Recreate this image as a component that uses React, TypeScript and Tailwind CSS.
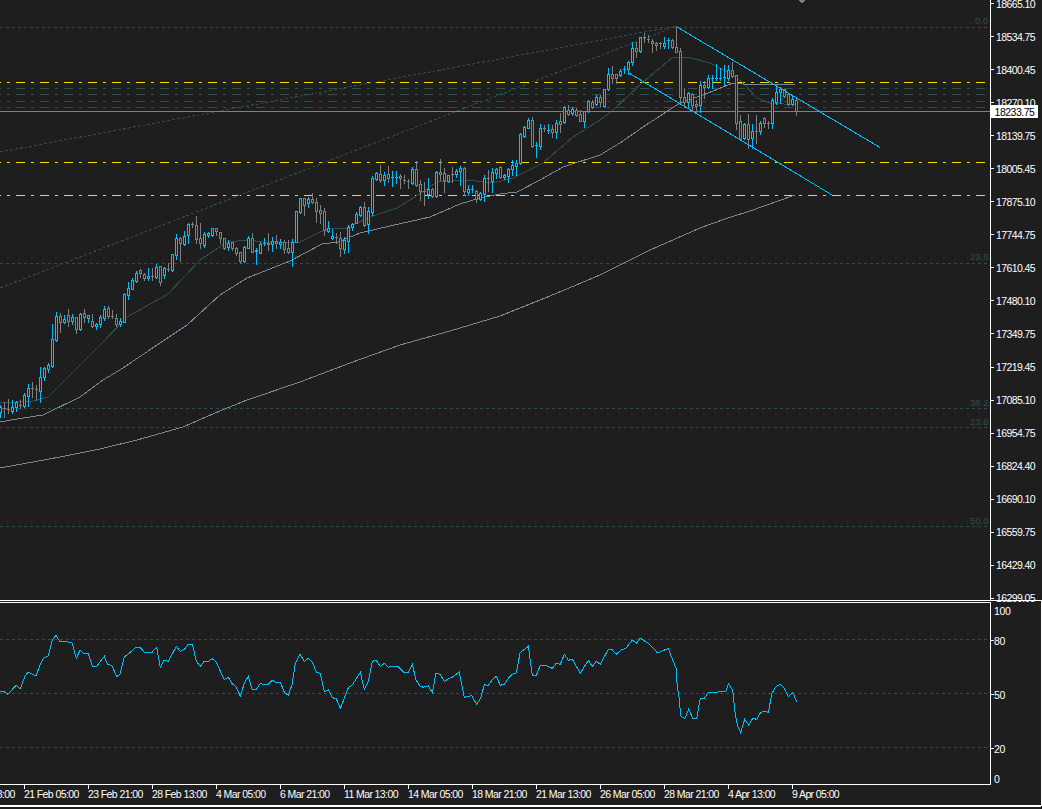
type Row = [string, number, number, number, number];

const BG = "#1e1e1e";
const BLUE = "#00bfff";
const GRAY = "#808080";
const SLATE = "#2f4f4f";
const STEEL = "#778899";
const GOLD = "#ffd700";

// body top, body bottom, wick top, wick bottom, in the units of each block below
const part1: Row[] = [
  ["b", 620, 635, 615, 650], ["g", 625, 625, 605, 650], ["g", 628, 628, 598, 640], ["b", 620, 633, 600, 640],
  ["b", 605, 622, 602, 632], ["g", 615, 615, 600, 625], ["b", 585, 617, 580, 620], ["b", 565, 587, 553, 617],
  ["g", 565, 565, 545, 590], ["g", 568, 568, 555, 600], ["b", 532, 572, 502, 605], ["b", 505, 530, 502, 540],
  ["b", 495, 507, 490, 515], ["b", 418, 497, 373, 500], ["b", 348, 420, 337, 422], ["g", 348, 365, 340, 395],
  ["b", 358, 365, 345, 370], ["g", 346, 362, 327, 377], ["b", 352, 362, 342, 372], ["g", 350, 388, 350, 398],
  ["b", 342, 388, 340, 390], ["g", 340, 352, 327, 365], ["b", 344, 354, 344, 365], ["g", 363, 378, 342, 382],
  ["b", 372, 377, 368, 386], ["b", 352, 373, 345, 380], ["b", 328, 354, 318, 360], ["g", 325, 347, 318, 355],
  ["g", 348, 348, 330, 355], ["g", 355, 373, 342, 378], ["b", 364, 373, 355, 378], ["b", 282, 365, 280, 367],
  ["b", 265, 285, 245, 298], ["b", 240, 267, 235, 268], ["b", 220, 242, 212, 245], ["g", 210, 220, 207, 232],
  ["g", 223, 234, 218, 240], ["b", 229, 233, 205, 240], ["g", 228, 228, 205, 240], ["b", 202, 230, 193, 235],
  ["g", 198, 245, 198, 255], ["b", 205, 225, 200, 235], ["g", 207, 207, 190, 212], ["b", 163, 209, 163, 212],
  ["b", 115, 165, 102, 178], ["g", 115, 130, 112, 182], ["b", 108, 132, 92, 135], ["b", 73, 104, 68, 128],
  ["g", 72, 72, 66, 80], ["g", 75, 117, 48, 130], ["g", 115, 128, 68, 145], ["b", 103, 135, 95, 140],
  ["b", 100, 104, 95, 112], ["b", 85, 104, 85, 108], ["g", 85, 93, 85, 105], ["g", 95, 115, 95, 128],
  ["g", 115, 143, 115, 146], ["b", 130, 140, 120, 150], ["g", 125, 145, 125, 150], ["g", 145, 160, 140, 165],
  ["g", 157, 183, 155, 188], ["b", 142, 183, 138, 185], ["b", 115, 143, 108, 145], ["g", 115, 155, 100, 155],
  ["b", 150, 153, 145, 193], ["b", 132, 158, 125, 160], ["b", 128, 128, 115, 135], ["g", 128, 133, 100, 150],
  ["b", 122, 133, 112, 152], ["g", 122, 128, 105, 145],
];

const part2: Row[] = [
  ["b", 425, 432, 418, 445], ["g", 425, 447, 420, 458], ["g", 445, 455, 420, 458], ["b", 425, 455, 418, 497],
  ["b", 333, 425, 333, 427], ["b", 295, 335, 295, 338], ["g", 295, 315, 295, 345], ["b", 298, 310, 290, 320],
  ["g", 298, 307, 280, 310], ["g", 307, 332, 295, 365], ["g", 330, 338, 315, 370], ["g", 333, 390, 325, 405],
  ["b", 385, 392, 363, 395], ["b", 408, 415, 388, 417], ["g", 410, 410, 398, 430], ["g", 413, 445, 395, 467],
  ["b", 420, 447, 410, 460], ["b", 382, 422, 375, 455], ["b", 372, 382, 370, 390], ["b", 343, 368, 335, 370],
  ["b", 320, 345, 318, 348], ["g", 322, 375, 305, 378], ["b", 333, 373, 322, 400], ["b", 233, 335, 228, 345],
  ["b", 220, 237, 215, 240], ["g", 222, 240, 195, 245], ["b", 224, 240, 215, 255], ["g", 222, 233, 197, 245],
  ["b", 230, 230, 212, 258], ["b", 230, 230, 212, 250], ["g", 228, 235, 222, 265], ["g", 241, 241, 225, 250],
  ["g", 243, 243, 238, 265], ["b", 208, 248, 200, 253], ["g", 208, 255, 183, 258], ["g", 253, 272, 240, 300],
  ["g", 272, 272, 245, 315], ["b", 268, 282, 235, 295], ["g", 266, 288, 265, 290], ["b", 215, 288, 213, 292],
  ["g", 215, 222, 178, 240], ["g", 220, 240, 205, 275], ["b", 225, 243, 225, 245], ["g", 222, 222, 200, 245],
  ["b", 213, 222, 208, 230], ["b", 204, 214, 198, 255], ["g", 204, 272, 200, 285], ["b", 268, 275, 255, 285],
  ["b", 268, 268, 255, 277], ["g", 272, 298, 270, 305], ["b", 280, 298, 275, 300], ["b", 235, 282, 225, 302],
  ["g", 235, 235, 210, 272], ["b", 217, 242, 205, 275], ["b", 208, 220, 205, 233], ["g", 200, 232, 198, 234],
  ["b", 226, 232, 222, 238], ["b", 208, 228, 205, 245], ["b", 195, 208, 180, 225], ["b", 190, 197, 180, 225],
  ["b", 102, 190, 100, 192], ["b", 82, 108, 78, 110], ["b", 60, 83, 55, 85], ["g", 60, 137, 52, 140],
  ["b", 135, 135, 125, 172], ["b", 85, 137, 72, 146], ["g", 85, 85, 75, 93], ["b", 90, 90, 72, 98],
  ["g", 88, 95, 75, 112], ["b", 68, 95, 60, 113], ["g", 63, 72, 38, 95], ["b", 20, 67, 18, 70],
  ["g", 30, 42, 15, 45], ["b", 28, 38, 22, 45], ["g", 30, 45, 25, 48], ["g", 42, 62, 30, 62],
  ["b", 32, 62, 32, 80], ["b", 2, 32, 0, 35], ["g", 5, 20, 0, 25], ["b", -9, 12, -15, 15],
];

const part3: Row[] = [
  ["g", 290, 305, 285, 318], ["b", 268, 318, 268, 320], ["b", 222, 268, 205, 270], ["g", 222, 235, 198, 250],
  ["g", 222, 233, 222, 250], ["b", 212, 225, 208, 228], ["b", 208, 208, 198, 218], ["b", 185, 207, 182, 222],
  ["b", 145, 187, 125, 195], ["g", 145, 152, 125, 170], ["b", 110, 153, 110, 155], ["g", 112, 112, 100, 125],
  ["g", 118, 118, 105, 125], ["g", 122, 128, 118, 155], ["g", 130, 135, 125, 150], ["g", 130, 130, 125, 145],
  ["b", 130, 138, 112, 143], ["b", 120, 120, 115, 145], ["g", 120, 142, 118, 145], ["g", 140, 155, 78, 157],
  ["g", 153, 290, 145, 305], ["g", 290, 305, 265, 320], ["b", 278, 305, 275, 320], ["g", 282, 315, 280, 330],
  ["g", 312, 318, 300, 335], ["b", 255, 315, 243, 335], ["g", 255, 262, 243, 295], ["b", 235, 260, 225, 265],
  ["b", 235, 235, 225, 265], ["b", 235, 235, 192, 240], ["b", 235, 235, 205, 240], ["b", 232, 232, 195, 255],
  ["b", 210, 235, 195, 240], ["g", 210, 228, 185, 230], ["g", 225, 370, 225, 388], ["g", 362, 418, 345, 420],
  ["b", 372, 415, 370, 418], ["g", 372, 418, 342, 445], ["b", 392, 415, 372, 445], ["g", 392, 392, 345, 430],
  ["b", 370, 392, 362, 402], ["g", 355, 368, 350, 380], ["g", 368, 368, 362, 385], ["b", 300, 368, 293, 383],
  ["b", 277, 307, 258, 312], ["b", 268, 277, 262, 310], ["g", 268, 287, 268, 292], ["g", 282, 312, 280, 315],
  ["b", 298, 312, 285, 315], ["g", 300, 332, 293, 345],
];

const toPx = (rows: Row[], y0: number) =>
  rows.map(([c, t, b, h, l]) => ({
    color: c === "b" ? BLUE : GRAY,
    top: Math.round(y0 + t / 3),
    bottom: Math.round(y0 + b / 3),
    high: Math.round(y0 + h / 3),
    low: Math.round(y0 + l / 3),
  }));

const candles = [...toPx(part1, 200), ...toPx(part2, 100), ...toPx(part3, 0)];

const rsiLeft = [
  [0, 303], [12, 305], [24, 313], [48, 286], [60, 298], [75, 258], [85, 246], [108, 258], [120, 225], [130, 205],
  [145, 197], [157, 150], [168, 136], [180, 156], [192, 154], [216, 158], [229, 205], [240, 181], [252, 192], [265, 190],
  [277, 229], [290, 229], [313, 199], [322, 222], [336, 228], [350, 260], [360, 252], [373, 201], [385, 192], [408, 172],
  [420, 172], [432, 186], [457, 186], [470, 172], [481, 232], [493, 210], [505, 214], [529, 169], [541, 184], [553, 178],
  [565, 162], [577, 162], [589, 214], [601, 229], [613, 214], [625, 214], [637, 206], [649, 217], [672, 268], [685, 262],
  [697, 282], [708, 290], [721, 319], [733, 280], [745, 259], [757, 300], [769, 298], [780, 281], [804, 284], [817, 271],
  [829, 278], [841, 277], [853, 307], [865, 316], [876, 284], [886, 220], [900, 193], [913, 214], [925, 205], [937, 216],
  [949, 246], [961, 251], [973, 305], [985, 300], [997, 323], [1009, 326], [1021, 355], [1033, 325], [1045, 293], [1057, 285],
  [1081, 247], [1093, 298], [1105, 275], [1117, 214], [1129, 211], [1141, 230], [1153, 220], [1165, 232],
];
const rsiMid = [
  [0, 139], [24, 139], [42, 157], [55, 157], [67, 133], [78, 180], [90, 198], [100, 202], [115, 198], [127, 218],
  [138, 160], [150, 163], [163, 184], [178, 175], [187, 172], [208, 156], [223, 232], [245, 227], [260, 253], [272, 235],
  [283, 194], [295, 196], [308, 178], [319, 169], [331, 196], [343, 193], [355, 175], [367, 163], [379, 159], [390, 100],
  [397, 93], [415, 79], [427, 166], [439, 166], [451, 136], [466, 136], [487, 145], [499, 130], [511, 133], [523, 103],
  [535, 121], [547, 118], [571, 160], [595, 121], [607, 139], [619, 124], [631, 133], [655, 88], [665, 88], [679, 103],
  [695, 88], [707, 86], [727, 60], [739, 70], [751, 55],
];
const rsiRight = [
  [12, 152], [25, 160], [50, 186], [60, 186], [85, 175], [96, 205], [108, 235], [112, 290], [117, 320], [122, 378],
  [134, 386], [146, 358], [158, 385], [170, 385], [181, 325], [192, 326], [205, 307], [230, 307], [236, 305], [258, 304],
  [265, 282], [278, 300], [284, 360], [292, 405], [302, 428], [314, 388], [326, 406], [338, 385], [350, 388], [362, 367],
  [372, 364], [385, 367], [396, 310], [408, 290], [420, 283], [432, 295], [445, 320], [458, 307], [470, 335],
];

const toPoints = (pts: number[][], x0: number, y0: number) =>
  pts.map(([x, y]) => `${(x0 + x / 3).toFixed(1)},${(y0 + y / 3).toFixed(1)}`).join(" ");

const rsiPoints = [toPoints(rsiLeft, 0, 590), toPoints(rsiMid, 390, 620), toPoints(rsiRight, 640, 590)].join(" ");

const maSlate =
  "0,403 33,401 48,397 77,368 100,345 127,317 168,294 200,260 227,242 248,240 263,242 293,242 300,242 320,232 333,228 347,228 370,217 397,208 418,195 437,182 467,180 493,183 513,178 543,163 573,137 600,120 613,110 643,82 673,57 687,57 710,63 733,75 743,83 757,98 770,103 797,105";
const maSteel =
  "0,422 17,419 43,415 80,397 103,380 123,368 160,343 187,325 220,295 247,278 290,261 322,244 338,242 360,233 390,226 430,217 460,204 480,198 500,194 517,192 540,180 563,167 600,155 620,143 643,127 680,103 703,95 733,83 743,84 795,84";
const maLong =
  "0,468 60,457 100,449 137,440 183,427 215,413 247,400 300,382 350,363 400,345 450,331 500,316 550,296 600,275 650,250 700,228 728,218 750,211 795,195";

const prices = [
  "18665.10", "18534.75", "18400.45", "18270.10", "18139.75", "18005.45", "17875.10", "17744.75", "17610.45", "17480.10",
  "17349.75", "17219.45", "17085.10", "16954.75", "16824.40", "16690.10", "16559.75", "16429.40", "16299.05",
];

const times = [
  "18 Feb 13:00", "21 Feb 05:00", "23 Feb 21:00", "28 Feb 13:00", "4 Mar 05:00", "6 Mar 21:00", "11 Mar 13:00",
  "14 Mar 05:00", "18 Mar 21:00", "21 Mar 13:00", "26 Mar 05:00", "28 Mar 21:00", "4 Apr 13:00", "9 Apr 05:00",
];

const rsiLabels = [
  { v: "100", cls: "flex items-center h-3", tick: "w-[3px] h-px" },
  { v: "80", cls: "flex items-center h-3 mt-[18px]", tick: "w-[3px] h-px bg-white" },
  { v: "50", cls: "flex items-center h-3 mt-[42px]", tick: "w-[3px] h-px bg-white" },
  { v: "20", cls: "flex items-center h-3 mt-[42px]", tick: "w-[3px] h-px bg-white" },
  { v: "0", cls: "flex items-center h-3 mt-[18px]", tick: "w-[3px] h-px" },
];

const fibLabels = [
  { x: 975, y: 24, text: "0.0" },
  { x: 970, y: 260, text: "23.6" },
  { x: 970, y: 406, text: "38.2" },
  { x: 970, y: 425, text: "23.6" },
  { x: 970, y: 524, text: "50.0" },
];

function PriceChart() {
  return (
    <svg width={990} height={600} className="block shrink-0" shapeRendering="crispEdges">
      {[27, 263, 408, 427, 526].map((y) => (
        <line key={y} x1={0} x2={990} y1={y + 0.5} y2={y + 0.5} stroke={SLATE} strokeDasharray="3 3" />
      ))}
      {[88, 94, 101, 107].map((y) => (
        <line key={y} x1={0} x2={986} y1={y + 0.5} y2={y + 0.5} stroke={SLATE} strokeDasharray="9 6 3 6" strokeDashoffset={8} />
      ))}
      {[82, 162, 195].map((y) => (
        <line key={y} x1={0} x2={986} y1={y + 0.5} y2={y + 0.5} stroke={GOLD} strokeDasharray="9 6 3 6" strokeDashoffset={8} />
      ))}
      <line x1={0} y1={152} x2={677} y2={26} stroke={SLATE} strokeDasharray="3 2" />
      <line x1={0} y1={288} x2={677} y2={26} stroke={SLATE} strokeDasharray="3 2" />
      {fibLabels.map((f) => (
        <text key={f.y} x={f.x} y={f.y} fill={SLATE} fontSize={9.5} fontFamily="'Liberation Sans', sans-serif">
          {f.text}
        </text>
      ))}
      <polyline points={maSlate} fill="none" stroke={SLATE} />
      <polyline points={maSteel} fill="none" stroke={STEEL} />
      <polyline points={maLong} fill="none" stroke={STEEL} />
      <line x1={0} x2={990} y1={111.5} y2={111.5} stroke={GRAY} />
      {candles.map((c, i) => {
        const x = 4 * i;
        const h = c.bottom - c.top;
        return (
          <g key={i}>
            <rect x={x} y={c.high} width={1} height={c.low - c.high + 1} fill={c.color} />
            <rect x={x - 1} y={c.top} width={3} height={h + 1} fill={c.color} />
            {h >= 2 && <rect x={x} y={c.top + 1} width={1} height={h - 1} fill={BG} />}
          </g>
        );
      })}
      <line x1={677} y1={27} x2={880} y2={147.5} stroke={BLUE} />
      <line x1={628} y1={72.5} x2={832} y2={195} stroke={BLUE} />
      <polygon points="799,0 805,0 802,4" fill={GRAY} />
    </svg>
  );
}

function RsiChart() {
  return (
    <svg width={990} height={181} className="block" shapeRendering="crispEdges">
      {[36, 90, 144].map((y) => (
        <line key={y} x1={0} x2={990} y1={y + 0.5} y2={y + 0.5} stroke={SLATE} strokeDasharray="3 3" />
      ))}
      <polyline points={rsiPoints} transform="translate(0 -603)" fill="none" stroke={BLUE} />
    </svg>
  );
}

export default function App() {
  return (
    <div
      className="relative w-[1042px] h-[809px] overflow-hidden bg-[#1e1e1e] text-white text-[10.5px] leading-3"
      style={{ fontFamily: "'Liberation Sans', Arial, sans-serif" }}
    >
      <div className="flex h-[600px]">
        <PriceChart />
        <div className="flex-1 border-l border-white">
          <div className="flex flex-col justify-between h-[602px]">
            {prices.map((p) => (
              <div key={p} className="flex items-center h-[7px] leading-[7px]">
                <span className="w-[3px] h-px bg-white" />
                <span className="ml-[2px] mt-px tracking-[-0.6px]">{p}</span>
              </div>
            ))}
          </div>
        </div>
      </div>
      <div className="h-[205px] border-t border-r border-white box-content">
        <div className="h-px" />
        <div className="flex h-[183px]">
          <div className="w-[991px] h-[183px] border-t border-r border-b border-white shrink-0">
            <RsiChart />
          </div>
          <div className="flex flex-col pt-[2px]">
            {rsiLabels.map((r) => (
              <div key={r.v} className={r.cls}>
                <span className={r.tick} />
                <span className="mt-px tracking-[-0.4px]">{r.v}</span>
              </div>
            ))}
          </div>
        </div>
        <div className="flex h-[20px] -ml-[40px]">
          {times.map((t) => (
            <div key={t} className="w-[64px] shrink-0">
              <div className="w-px h-[4px] bg-white" />
              <div className="whitespace-nowrap leading-[10px] tracking-[-0.6px]">{t}</div>
            </div>
          ))}
        </div>
        <div className="h-[2px] bg-white" />
      </div>
      <div className="absolute left-[991px] top-[105px] w-[47px] h-[13px] bg-white text-black text-center leading-[15px] tracking-[-0.5px]">
        18233.75
      </div>
    </div>
  );
}
